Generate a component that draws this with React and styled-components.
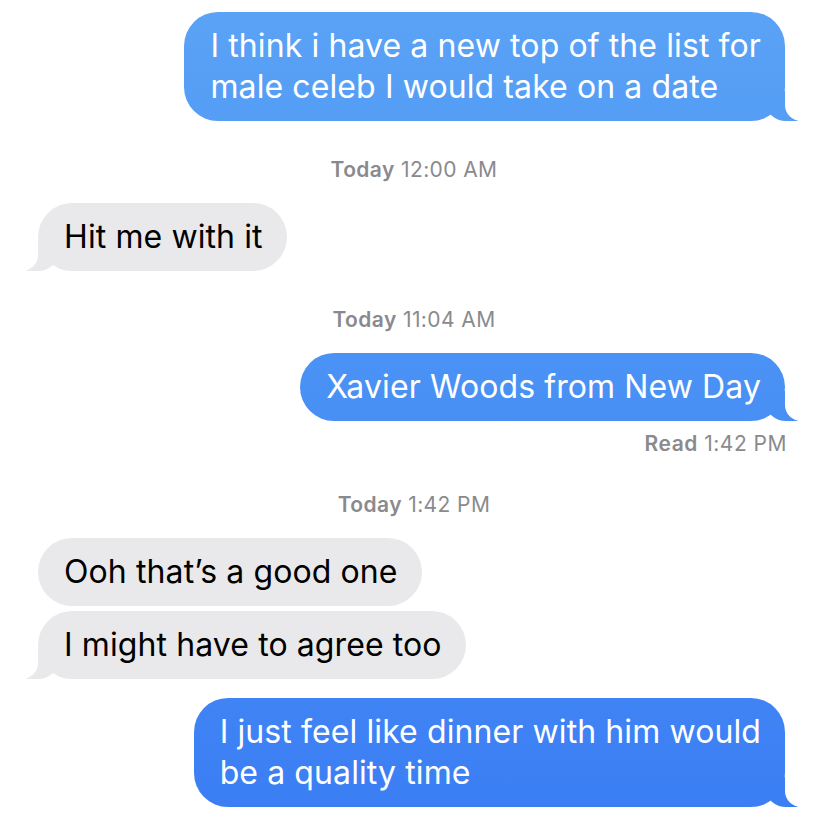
import React from 'react'
import styled, { createGlobalStyle, css } from 'styled-components'

const GlobalStyle = createGlobalStyle`
  html, body {
    margin: 0;
    padding: 0;
    background: #ffffff;
  }
  body {
    font-family: "Inter", "Roboto", "Liberation Sans", sans-serif;
    -webkit-font-smoothing: antialiased;
  }
`

const messages = [
    { type: 'me', lines: ['I think i have a new top of the list for', 'male celeb I would take on a date'], tail: true },
    { type: 'stamp', day: 'Today', time: '12:00 AM' },
    { type: 'them', lines: ['Hit me with it'], tail: true },
    { type: 'stamp', day: 'Today', time: '11:04 AM' },
    { type: 'me', lines: ['Xavier Woods from New Day'], tail: true },
    { type: 'read', label: 'Read', time: '1:42 PM' },
    { type: 'stamp', day: 'Today', time: '1:42 PM' },
    { type: 'them', lines: ['Ooh that\u2019s a good one'], tail: false, gap: 0 },
    { type: 'them', lines: ['I might have to agree too'], tail: true, gap: 5 },
    { type: 'me', lines: ['I just feel like dinner with him would', 'be a quality time'], tail: true, gap: 19 },
]

const App = () => {
    return (
        <>
            <GlobalStyle />
            <Thread>
                {messages.map((item, index) => {
                    if (item.type === 'stamp') {
                        return (
                            <Stamp key={index}>
                                <b>{item.day}</b> {item.time}
                            </Stamp>
                        )
                    }
                    if (item.type === 'read') {
                        return (
                            <Receipt key={index}>
                                <b>{item.label}</b> {item.time}
                            </Receipt>
                        )
                    }
                    return (
                        <Row key={index} $me={item.type === 'me'} $gap={item.gap || 0}>
                            <Bubble $me={item.type === 'me'} $tail={item.tail}>
                                {item.lines.map((line, i) => (
                                    <React.Fragment key={i}>
                                        {i > 0 && <br />}
                                        {line}
                                    </React.Fragment>
                                ))}
                            </Bubble>
                        </Row>
                    )
                })}
            </Thread>
        </>
    )
}

const Thread = styled.div`
  width: 828px;
  min-height: 817px;
  box-sizing: border-box;
  padding: 12px 43px 0 38px;
  display: flex;
  flex-direction: column;
`

const Row = styled.div`
  display: flex;
  justify-content: ${props => props.$me ? 'flex-end' : 'flex-start'};
  margin-top: ${props => props.$gap}px;
`

const blueFill = css`
  background: linear-gradient(180deg, #5aa3f5 0px, #4a91f5 380px, #3b7ef4 817px);
  background-attachment: fixed;
`

const Bubble = styled.div`
  position: relative;
  box-sizing: border-box;
  padding: 13px 24px 14px 26px;
  border-radius: 34px;
  font-size: 32px;
  line-height: 41px;
  letter-spacing: 0.1px;
  color: ${props => props.$me ? '#ffffff' : '#000000'};
  ${props => props.$me ? blueFill : css`background: #e9e9eb;`}

  ${props => props.$tail && props.$me && css`
    &::before {
      content: "";
      position: absolute;
      bottom: 0;
      right: -13px;
      width: 32px;
      height: 30px;
      ${blueFill}
      border-bottom-left-radius: 20px 18px;
    }
    &::after {
      content: "";
      position: absolute;
      bottom: 0;
      right: -34px;
      width: 34px;
      height: 32px;
      background: #ffffff;
      border-bottom-left-radius: 16px;
    }
  `}

  ${props => props.$tail && !props.$me && css`
    &::before {
      content: "";
      position: absolute;
      bottom: 0;
      left: -12px;
      width: 32px;
      height: 30px;
      background: #e9e9eb;
      border-bottom-right-radius: 20px 18px;
    }
    &::after {
      content: "";
      position: absolute;
      bottom: 0;
      left: -34px;
      width: 34px;
      height: 32px;
      background: #ffffff;
      border-bottom-right-radius: 16px;
    }
  `}
`

const Stamp = styled.div`
  text-align: center;
  margin: 37px 0 21px 0;
  padding-left: 5px;
  font-size: 21px;
  line-height: 24px;
  letter-spacing: 0.4px;
  color: #8a8a8e;

  b {
    font-weight: 600;
  }
`

const Receipt = styled.div`
  text-align: right;
  margin-top: 11px;
  margin-right: -2px;
  font-size: 21px;
  line-height: 24px;
  letter-spacing: 0.5px;
  color: #8a8a8e;

  b {
    font-weight: 600;
  }
`

export default App
